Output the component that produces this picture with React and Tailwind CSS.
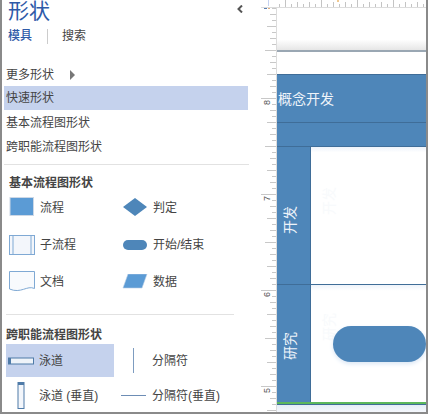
import React from "react";

const Flow = () => (
  <svg width="28" height="22" viewBox="0 0 28 22">
    <rect x="2" y="0.5" width="23.5" height="18" fill="#5b9bd5" stroke="#cdd8e6" />
  </svg>
);
const Diamond = () => (
  <svg width="26" height="20" viewBox="0 0 26 20">
    <path d="M13 0 L25 9 L13 18 L1 9 Z" fill="#4e86b9" />
  </svg>
);
const SubProcess = () => (
  <svg width="28" height="22" viewBox="0 0 28 22">
    <rect x="1.5" y="1.5" width="25" height="19" fill="#f3f6fb" stroke="#7fa9d4" />
    <path d="M5 1.5 V20.5 M23 1.5 V20.5" stroke="#7fa9d4" />
  </svg>
);
const Terminator = () => (
  <svg width="26" height="12" viewBox="0 0 26 12">
    <rect x="1" y="1" width="24" height="10" rx="5" fill="#4e86b9" />
  </svg>
);
const Doc = () => (
  <svg width="28" height="22" viewBox="0 0 28 22">
    <path d="M1.5 0.5 H26.5 V17.5 C19 14 13 23 1.5 18 Z" fill="#f8fafd" stroke="#7fa9d4" />
  </svg>
);
const Data = () => (
  <svg width="26" height="16" viewBox="0 0 26 16">
    <path d="M6 0 H25 L20 14 H1 Z" fill="#5b9bd5" stroke="#b9cfe6" strokeWidth="0.6" />
  </svg>
);
const Swimlane = () => (
  <svg width="26" height="8" viewBox="0 0 26 8">
    <rect x="0.5" y="1" width="25" height="6" fill="#eef3f9" stroke="#4f7ba8" />
    <rect x="0" y="1" width="3" height="6" fill="#4f7ba8" />
  </svg>
);
const SwimlaneV = () => (
  <svg width="8" height="27" viewBox="0 0 8 27">
    <rect x="1" y="0.5" width="6" height="26" fill="#f3f6fb" stroke="#4f7ba8" />
    <rect x="1" y="0" width="6" height="3" fill="#4f7ba8" />
  </svg>
);

const Shape = ({ icon, label }) => (
  <div className="flex items-center h-[37px]">
    <div className="w-[28px] flex justify-center">{icon}</div>
    <span className="ml-[4px]">{label}</span>
  </div>
);

const TopRuler = () => {
  const ticks = [];
  for (let x = 28; x < 175; x += 6) {
    const n = (x - 34) / 6;
    const h = n % 6 === 0 ? 7 : n % 2 === 0 ? 5 : 3;
    ticks.push(<line key={x} x1={x + 0.5} x2={x + 0.5} y1={7 - h} y2={7} stroke="#c4c4c4" />);
  }
  return (
    <svg width="175" height="8" viewBox="0 0 175 8" className="block">
      <rect x="17" y="0" width="1" height="6" fill="#c5d2f0" />
      <rect x="86" y="0" width="2" height="2" fill="#f0c890" />
      {ticks}
      <line x1="10" x2="175" y1="7.5" y2="7.5" stroke="#dcdcdc" />
    </svg>
  );
};

const SideRuler = () => {
  const ticks = [];
  for (let y = 0; y < 405; y += 6) {
    const n = (y - 90) / 6;
    const w = n % 16 === 0 ? 15 : n % 8 === 0 ? 11 : n % 4 === 0 ? 9 : n % 2 === 0 ? 6 : 4;
    ticks.push(<line key={y} x1={25 - w} x2={25} y1={y + 0.5} y2={y + 0.5} stroke="#c8c8c8" />);
  }
  const labels = [
    ["8", 97],
    ["7", 193],
    ["6", 289],
    ["5", 385],
  ];
  return (
    <svg width="26" height="405" viewBox="0 0 26 405" className="block shrink-0">
      {ticks}
      <line x1="25.5" x2="25.5" y1="0" y2="405" stroke="#dcdcdc" />
      <rect x="13" y="0" width="3" height="1" fill="#5b7fb0" />
      <rect x="17" y="0" width="2" height="1" fill="#e0b080" />
      {labels.map(([t, y]) => (
        <text key={t} transform={`translate(19 ${y}) rotate(-90)`} fontSize="9" fill="#555">
          {t}
        </text>
      ))}
    </svg>
  );
};

const App = () => {
  return (
    <div
      className="w-[428px] h-[414px] flex overflow-hidden bg-white text-[12px] leading-[16px] text-[#444] border-l-2 border-r-2 border-b-2 border-[#8a8a8a]"
      style={{ fontFamily: '"Liberation Sans", "Noto Sans CJK SC", sans-serif' }}
    >
      {/* Shapes panel */}
      <aside className="w-[249px] shrink-0 flex flex-col">
        <div className="flex justify-between items-start pl-[6px] pr-[8px] h-[22px]">
          <h1 className="text-[21px] leading-[22px] text-[#2e5aa8]">形状</h1>
          <svg width="6" height="8" viewBox="0 0 6 8" className="mt-[5px]">
            <path d="M5 0.5 L1.5 4 L5 7.5" fill="none" stroke="#555" strokeWidth="2" />
          </svg>
        </div>
        <div className="flex items-center h-[16px] mt-[6px] pl-[6px]">
          <span className="font-medium text-[#2e5aa8]">模具</span>
          <span className="w-px h-[15px] bg-[#ccc] ml-[15px] mr-[14px]" />
          <span>搜索</span>
        </div>
        <div className="mt-[19px] ml-[2px] mr-[3px]">
          <div className="h-[23px] pl-[2px] flex items-center">
            更多形状
            <span className="ml-[16px] w-0 h-0 border-y-[5px] border-y-transparent border-l-[5px] border-l-[#777]" />
          </div>
          <div className="h-[24px] pl-[2px] flex items-center bg-[#c5d2ed]">快速形状</div>
          <div className="h-[24px] pl-[2px] pt-[1px] flex items-center">基本流程图形状</div>
          <div className="h-[24px] pl-[2px] pt-[1px] flex items-center">跨职能流程图形状</div>
        </div>
        <div className="h-px bg-[#e2e2e2] ml-[2px] mr-[2px] mt-[6px] shrink-0" />
        <div className="mt-[12px] h-[12px] leading-[12px] pl-[7px] font-bold">基本流程图形状</div>
        <div className="grid grid-cols-[113px_1fr] pl-[6px]">
          <Shape icon={<Flow />} label="流程" />
          <Shape icon={<Diamond />} label="判定" />
          <Shape icon={<SubProcess />} label="子流程" />
          <Shape icon={<Terminator />} label="开始/结束" />
          <Shape icon={<Doc />} label="文档" />
          <Shape icon={<Data />} label="数据" />
        </div>
        <div className="h-px bg-[#e2e2e2] ml-[4px] mr-[17px] mt-[14px] shrink-0" />
        <div className="mt-[14px] h-[12px] leading-[12px] pl-[4px] font-bold">跨职能流程图形状</div>
        <div className="grid grid-cols-[108px_1fr] pl-[4px] mt-[3px]">
          <div className="flex items-center h-[33px] bg-[#c5d2ed] pl-[2px]">
            <Swimlane />
            <span className="ml-[5px]">泳道</span>
          </div>
          <div className="flex items-center h-[33px] pl-[19px]">
            <span className="w-px h-[25px] bg-[#7d9cc0]" />
            <span className="ml-[18px]">分隔符</span>
          </div>
          <div className="flex items-center h-[37px] pl-[11px]">
            <SwimlaneV />
            <span className="ml-[14px]">泳道 (垂直)</span>
          </div>
          <div className="flex items-center h-[37px] pl-[7px]">
            <span className="w-[25px] h-px bg-[#6d8db5]" />
            <span className="ml-[6px]">分隔符(垂直)</span>
          </div>
        </div>
      </aside>

      {/* Drawing area */}
      <main className="flex-1 min-w-0 flex flex-col">
        <TopRuler />
        <div className="flex-1 min-h-0 flex">
          <SideRuler />
          <div className="flex-1 min-w-0 flex flex-col overflow-hidden">
            <div className="h-[44px] shrink-0 bg-gradient-to-b from-white from-75% to-[#e6e6e6] border-b-2 border-[#9aa7b3]" />
            <div className="h-[22px] shrink-0" />
            <div className="h-[48px] shrink-0 bg-[#4e86b9] border-t border-[#3f6d98] flex items-center pl-[1px] text-[14px] text-[#eef4fa]">
              概念开发
            </div>
            <div className="h-[24px] shrink-0 bg-[#4e86b9] border-t border-[#3f6d98]" />
            <div className="h-[139px] shrink-0 flex border-t border-b border-[#3f6d98]">
              <div className="w-[34px] shrink-0 bg-[#4e86b9] border-r border-[#3f6d98] flex items-center justify-center pt-[9px] pr-[8px] text-[14px] text-[#eef4fa]">
                <span className="-rotate-90 whitespace-nowrap">开发</span>
              </div>
              <div className="relative flex-1 bg-gradient-to-b from-[#eef3fa] from-0% to-white to-[4%]">
                <span className="absolute left-[4px] top-[46px] -rotate-90 whitespace-nowrap text-[14px] text-[#f8fafc]">开发</span>
              </div>
            </div>
            <div className="h-[117px] shrink-0 flex">
              <div className="w-[34px] shrink-0 bg-[#4e86b9] border-r border-[#3f6d98] flex items-center justify-center pt-[5px] pr-[8px] text-[14px] text-[#eef4fa]">
                <span className="-rotate-90 whitespace-nowrap">研究</span>
              </div>
              <div className="relative flex-1 min-w-0 flex items-center pl-[22px] bg-gradient-to-b from-[#eef3fa] from-0% to-white to-[5%]">
                <span className="absolute left-[4px] top-[34px] -rotate-90 whitespace-nowrap text-[14px] text-[#f8fafc]">研究</span>
                <div className="relative flex-1 h-[36px] rounded-[18px] bg-[#4e86b9] shadow-[0_2px_4px_#dbe7f5]" />
              </div>
            </div>
            <div className="h-[2px] shrink-0 bg-[#5cb85c]" />
            <div className="h-px shrink-0 bg-[#3f6d98]" />
            <div className="flex-1 bg-gradient-to-b from-[#e4edf8] to-[#f5f8fc]" />
          </div>
        </div>
      </main>
    </div>
  );
};

export default App;
